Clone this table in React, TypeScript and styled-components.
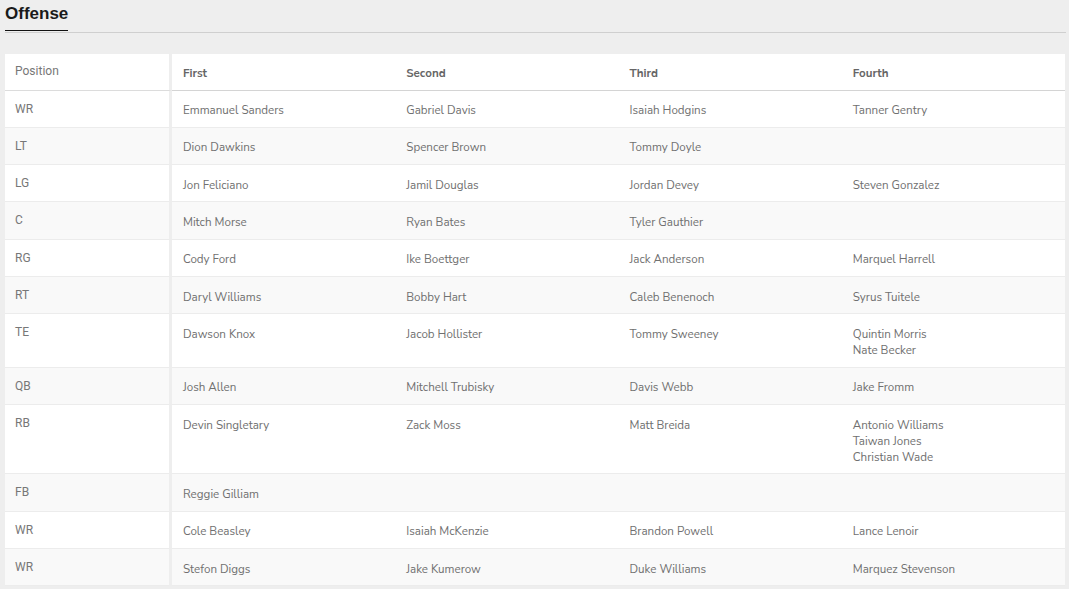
import React from "react";
import styled, { createGlobalStyle } from "styled-components";

const Global = createGlobalStyle`
  html, body { margin: 0; padding: 0; background: #eeeeee; }
  body { font-family: "Nunito Sans", "Lato", "Open Sans", sans-serif; }
`;

const Page = styled.div`
  padding: 0 3px 0 5px;
  width: 1061px;
`;

const HeadingBar = styled.div`
  border-bottom: 1px solid #cfcfcf;
  display: flex;
`;

const Title = styled.h2`
  margin: 0 0 1px;
  padding: 4px 0 6px;
  font-family: "Liberation Sans", Arial, sans-serif;
  font-size: 17px;
  line-height: 20px;
  font-weight: 700;
  color: #1a1a1a;
  border-bottom: 1px solid #111;
`;

const Table = styled.table`
  margin-top: 21px;
  width: 1060px;
  border-collapse: separate;
  border-spacing: 0;
  table-layout: fixed;
`;

const Row = styled.tr<{ $alt?: boolean }>`
  background: ${(p) => (p.$alt ? "#f9f9f9" : "#ffffff")};
`;

const PosCell = styled.td<{ $head?: boolean }>`
  width: 154px;
  padding: ${(p) => (p.$head ? "8.5px 0 11px 10px" : "10px 0 10.33px 10px")};
  vertical-align: top;
  font-family: "Roboto", "Liberation Sans", sans-serif;
  font-size: 12px;
  line-height: 16px;
  color: #777;
  border-right: 3px solid #eeeeee;
  border-bottom: 1px solid ${(p) => (p.$head ? "#dcdcdc" : "#ececec")};
`;

const Cell = styled.td<{ $head?: boolean }>`
  padding: ${(p) => (p.$head ? "10.5px 10px 9px 11px" : "11.5px 10px 8.83px 11px")};
  vertical-align: top;
  font-size: 11.6px;
  line-height: 16px;
  font-weight: ${(p) => (p.$head ? 700 : 400)};
  color: ${(p) => (p.$head ? "#666" : "#707070")};
  border-bottom: 1px solid ${(p) => (p.$head ? "#d4d4d4" : "#ececec")};
`;

const Name = styled.div``;

type R = { pos: string; cols: string[][] };

const rows: R[] = [
  { pos: "WR", cols: [["Emmanuel Sanders"], ["Gabriel Davis"], ["Isaiah Hodgins"], ["Tanner Gentry"]] },
  { pos: "LT", cols: [["Dion Dawkins"], ["Spencer Brown"], ["Tommy Doyle"], []] },
  { pos: "LG", cols: [["Jon Feliciano"], ["Jamil Douglas"], ["Jordan Devey"], ["Steven Gonzalez"]] },
  { pos: "C", cols: [["Mitch Morse"], ["Ryan Bates"], ["Tyler Gauthier"], []] },
  { pos: "RG", cols: [["Cody Ford"], ["Ike Boettger"], ["Jack Anderson"], ["Marquel Harrell"]] },
  { pos: "RT", cols: [["Daryl Williams"], ["Bobby Hart"], ["Caleb Benenoch"], ["Syrus Tuitele"]] },
  { pos: "TE", cols: [["Dawson Knox"], ["Jacob Hollister"], ["Tommy Sweeney"], ["Quintin Morris", "Nate Becker"]] },
  { pos: "QB", cols: [["Josh Allen"], ["Mitchell Trubisky"], ["Davis Webb"], ["Jake Fromm"]] },
  { pos: "RB", cols: [["Devin Singletary"], ["Zack Moss"], ["Matt Breida"], ["Antonio Williams", "Taiwan Jones", "Christian Wade"]] },
  { pos: "FB", cols: [["Reggie Gilliam"], [], [], []] },
  { pos: "WR", cols: [["Cole Beasley"], ["Isaiah McKenzie"], ["Brandon Powell"], ["Lance Lenoir"]] },
  { pos: "WR", cols: [["Stefon Diggs"], ["Jake Kumerow"], ["Duke Williams"], ["Marquez Stevenson"]] },
];

export default function App() {
  return (
    <Page>
      <Global />
      <HeadingBar>
        <Title>Offense</Title>
      </HeadingBar>
      <Table>
        <thead>
          <Row>
            <PosCell $head>Position</PosCell>
            <Cell $head>First</Cell>
            <Cell $head>Second</Cell>
            <Cell $head>Third</Cell>
            <Cell $head>Fourth</Cell>
          </Row>
        </thead>
        <tbody>
          {rows.map((r, i) => (
            <Row key={i} $alt={i % 2 === 1}>
              <PosCell>{r.pos}</PosCell>
              {r.cols.map((c, j) => (
                <Cell key={j}>
                  {c.map((n) => (
                    <Name key={n}>{n}</Name>
                  ))}
                </Cell>
              ))}
            </Row>
          ))}
        </tbody>
      </Table>
    </Page>
  );
}
